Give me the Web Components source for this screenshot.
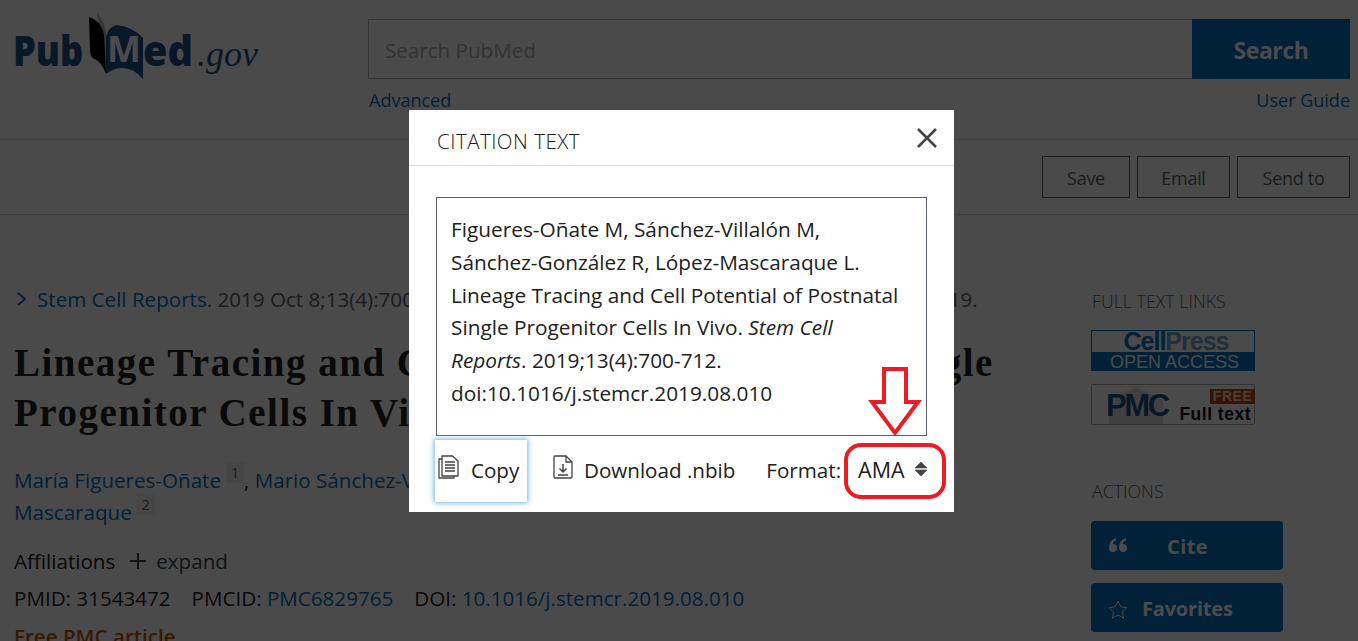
<!DOCTYPE html>
<html lang="en">
<head>
<meta charset="utf-8">
<title>PubMed citation</title>
<style>
  html, body { margin: 0; height: 100%; overflow: hidden; background: #fff; }
  body { font-family: "Open Sans", "Liberation Sans", sans-serif; color: #212121; }
</style>
</head>
<body>
<pm-app>
  <pm-header></pm-header>
  <pm-toolbar></pm-toolbar>
  <pm-main>
    <pm-article></pm-article>
    <pm-aside></pm-aside>
  </pm-main>
  <pm-cite-dialog slot="overlay" format="AMA">
    Figueres-Oñate M, Sánchez-Villalón M, Sánchez-González R, López-Mascaraque L. Lineage Tracing and Cell Potential of Postnatal Single Progenitor Cells In Vivo. <i>Stem Cell Reports</i>. 2019;13(4):700-712. doi:10.1016/j.stemcr.2019.08.010
  </pm-cite-dialog>
</pm-app>

<script>
/* small helper, every element below is the same few lines otherwise */
function define(name, html) {
  const tpl = document.createElement('template');
  tpl.innerHTML = html;
  customElements.define(name, class extends HTMLElement {
    constructor() {
      super();
      this.attachShadow({ mode: 'open' }).appendChild(tpl.content.cloneNode(true));
    }
  });
}

/* ---- page shell + dimmed backdrop ---- */
define('pm-app', `
  <style>
    :host { display: block; position: relative; width: 100%; height: 641px; overflow: hidden; }
    .backdrop { position: absolute; inset: 0; background: rgba(0,0,0,.71); }
    .center { position: absolute; left: 409px; top: 110px; }
  </style>
  <slot></slot>
  <div class="backdrop"></div>
  <div class="center"><slot name="overlay"></slot></div>
`);

/* ---- top search header ---- */
define('pm-header', `
  <style>
    :host { display: flex; box-sizing: border-box; height: 140px; border-bottom: 1px solid #d6d7d9; padding: 0 8px 0 0; }
    .logo { width: 368px; flex: none; position: relative; height: 90px; color: #20558a; font-weight: 800; font-size: 43px; line-height: 1; }
    .logo svg { position: absolute; left: 0; top: 0; }
    .pub, .ed, .m, .gov { position: absolute; }
    .pub, .ed { top: 28px; transform-origin: 0 0; }
    .pub { left: 13px; transform: scaleX(.84); }
    .ed { left: 143px; transform: scaleX(.92); }
    .m { left: 107px; top: 31px; font-size: 36px; font-weight: 700; color: #fff; }
    .gov { left: 197px; top: 36px; font: italic 36px/1 "Liberation Serif", serif; }
    .search { flex: 1; padding-top: 19px; }
    .row { display: flex; height: 60px; }
    .input { flex: 1; box-sizing: border-box; border: 1px solid #aeb0b5; border-right: 0; padding-left: 16px; font-size: 20.6px; line-height: 60px; color: #aeb0b5; }
    .btn { width: 158px; background: #0071bc; color: #fff; font-weight: 700; font-size: 23px; line-height: 62px; text-align: center; letter-spacing: -.4px; }
    .links { display: flex; justify-content: space-between; font-size: 18px; line-height: 24px; color: #0071bc; padding: 9px 0 0 1px; }
  </style>
  <div class="logo">
    <span class="pub">Pub</span><span class="ed">ed</span>
    <svg width="150" height="90" viewBox="0 0 150 90">
      <path d="M97 13 Q105 22 106 33 L106 74 L104 70 Z" fill="#bbb"/>
      <path d="M89 17 Q100 20 104 34 L106 74 Q102 62 93 58 Q90 56 90 50 Z" fill="#000"/>
      <path d="M106 37 Q109 26 117 25 Q133 27 143 38 L143 79 Q126 60 106 74 Z" fill="#20558a"/>
    </svg>
    <span class="m">M</span>
    <span class="gov">.gov</span>
  </div>
  <div class="search">
    <div class="row"><div class="input">Search PubMed</div><div class="btn">Search</div></div>
    <div class="links"><span>Advanced</span><span>User Guide</span></div>
  </div>
`);

/* ---- save / email / send to ---- */
define('pm-toolbar', `
  <style>
    :host { display: flex; justify-content: flex-end; gap: 7px; box-sizing: border-box; height: 75px; border-bottom: 1px solid #d6d7d9; padding: 16px 8px 0 0; }
    span { box-sizing: border-box; height: 42px; border: 1px solid #5b616b; font-size: 18px; line-height: 42px; text-align: center; color: #5b616b; letter-spacing: -.3px; }
  </style>
  <span style="width:88px">Save</span>
  <span style="width:93px">Email</span>
  <span style="width:113px">Send to</span>
`);

define('pm-main', `
  <style>
    :host { display: flex; padding: 71px 0 0 14px; }
    ::slotted(pm-article) { width: 1077px; flex: none; }
  </style>
  <slot></slot>
`);

/* ---- article column, mostly behind the dialog ---- */
define('pm-article', `
  <style>
    :host { display: block; font-size: 20.6px; color: #212121; }
    a { color: #0071bc; }
    .cit { display: flex; align-items: center; line-height: 26px; color: #5b616b; white-space: nowrap; }
    .cit svg { margin: 0 9px 0 2px; }
    h1 { font: 700 39px/50px "Liberation Serif", serif; margin: 26px 0 0; width: 990px; letter-spacing: 1.5px; }
    .authors { margin-top: 26px; line-height: 32px; width: 990px; }
    sup { font-size: 14px; line-height: 0; color: #5b616b; background: #f1f1f1; padding: 1px 5px; margin-left: 5px; position: relative; top: -2px; vertical-align: super; }
    .aff { display: flex; align-items: center; margin-top: 19px; line-height: 28px; }
    .aff svg { margin: 0 10px 0 15px; }
    .aff b { font-weight: 400; color: #3d4551; }
    .ids { margin-top: 9px; line-height: 28px; }
    .ids span { margin-right: 21px; }
    .free { margin-top: 10px; line-height: 28px; color: #c05600; font-weight: 600; }
  </style>
  <div class="cit">
    <svg width="12" height="16" viewBox="0 0 12 16"><path d="M2 2l7 6-7 6" fill="none" stroke="#0071bc" stroke-width="2"/></svg>
    <a>Stem Cell Reports.</a>&nbsp;2019 Oct 8;13(4):700-712. doi: 10.1016/j.stemcr.2019.08.010. Epub 2019 Sep 19.
  </div>
  <h1>Lineage Tracing and Cell Potential of Postnatal Single Progenitor Cells In Vivo</h1>
  <div class="authors">
    <a>María Figueres-Oñate</a><sup>1</sup>, <a>Mario Sánchez-Villalón</a><sup>1</sup>, <a>Rebeca Sánchez-González</a><sup>1</sup>, <a>Laura López-<br>Mascaraque</a><sup>2</sup>
  </div>
  <div class="aff">Affiliations
    <svg width="16" height="16" viewBox="0 0 16 16"><path d="M8 0v16M0 8h16" stroke="#3d4551" stroke-width="2"/></svg>
    <b>expand</b></div>
  <div class="ids"><span>PMID: 31543472</span><span>PMCID: <a>PMC6829765</a></span><span>DOI: <a>10.1016/j.stemcr.2019.08.010</a></span></div>
  <div class="free">Free PMC article</div>
`);

/* ---- right side column ---- */
define('pm-aside', `
  <style>
    :host { display: block; width: 192px; flex: none; padding-top: 4px; }
    h3 { margin: 0 0 0 1px; font-size: 17.600px; line-height: 22px; font-weight: 300; color: #5b616b; letter-spacing: .1px; }
    .cell { box-sizing: border-box; width: 164px; height: 41px; margin-top: 18px; border: 1px solid #0071bc; text-align: center; font-family: "Liberation Sans", sans-serif; }
    .cell .top { height: 21px; font-size: 25px; line-height: 21px; font-weight: 700; color: #0071bc; letter-spacing: -1px; padding-left: 6px; }
    .cell .top i { font-style: normal; color: #6ea5cf; }
    .cell .bot { height: 19px; background: #0071bc; color: #fff; font-size: 18px; line-height: 20px; padding-left: 3px; }
    .pmc { box-sizing: border-box; position: relative; width: 164px; height: 41px; margin: 13px 0 55px; border: 1px solid #aaa; border-radius: 2px; font-family: "Liberation Sans", sans-serif; font-weight: 700; }
    .pmc svg { position: absolute; left: 17px; top: 1px; }
    .pmc .name { position: absolute; left: 14px; top: 6px; font-size: 31px; line-height: 30px; color: #20558a; letter-spacing: -2.400px; }
    .pmc .free { position: absolute; right: -1px; top: 4px; width: 45px; height: 15px; background: #c0400c; color: #f4d6c8; font-size: 14px; line-height: 15px; text-align: center; letter-spacing: .5px; }
    .pmc .full { position: absolute; right: 3px; top: 19px; font-size: 17.500px; line-height: 20px; color: #111; letter-spacing: .5px; }
    .act { display: flex; align-items: center; box-sizing: border-box; width: 192px; height: 49px; margin-top: 13px; background: #0071bc; border-radius: 4px; color: #fff; font-weight: 700; font-size: 20px; letter-spacing: -.2px; position: relative; padding: 2px 0 0 51px; }
    .act.c { margin-top: 19px; padding-left: 76px; letter-spacing: .4px; }
    .act svg { position: absolute; left: 17px; top: 17px; }
  </style>
  <h3>FULL TEXT LINKS</h3>
  <div class="cell"><div class="top">Cell<i>Press</i></div><div class="bot">OPEN ACCESS</div></div>
  <div class="pmc">
    <svg width="56" height="39" viewBox="0 0 56 39"><path d="M0 14L27 1l27 13v24H0z" fill="#ddd"/></svg>
    <span class="name">PMC</span><span class="free">FREE</span><span class="full">Full text</span>
  </div>
  <h3>ACTIONS</h3>
  <div class="act c">
    <svg width="20" height="16" viewBox="0 0 20 16"><path d="M8 0Q1 2 1 10a4 4 0 1 0 4-4Q5 3.500 8 2.500zM18 0q-7 2-7 10a4 4 0 1 0 4-4q0-2.500 3-3.500z" fill="#fff"/></svg>
    Cite
  </div>
  <div class="act">
    <svg width="20" height="19" viewBox="0 0 20 19"><path d="M10 1l2.700 5.800 6.300.8-4.600 4.300 1.200 6.200L10 15l-5.600 3.100 1.200-6.200L1 7.600l6.300-.8z" fill="none" stroke="#fff" stroke-width="1"/></svg>
    Favorites
  </div>
`);

/* ---- the citation dialog + red annotation ---- */
const dialogTpl = document.createElement('template');
dialogTpl.innerHTML = `
  <style>
    :host { display: block; position: relative; box-sizing: border-box; width: 545px; height: 402px; background: #fff; color: #212121; font-size: 20px; }
    header { display: flex; justify-content: space-between; align-items: center; height: 56px; box-sizing: border-box; border-bottom: 1px solid #dcdcdc; padding: 0 16px 0 28px; }
    h2 { margin: 7px 0 0; font-size: 20.500px; font-weight: 300; letter-spacing: .5px; color: #212121; }
    .text { box-sizing: border-box; width: 491px; height: 239px; margin: 31px 0 0 27px; border: 1px solid #5b616b; padding: 15px 24px 0 14px; font-size: 20.800px; line-height: 32.800px; }
    .tools { display: flex; align-items: center; height: 62px; margin: 4px 0 0 26px; font-size: 20.600px; }
    .tools span { margin-bottom: 3px; }
    .tools svg { margin-bottom: 8px; }
    .copy { display: flex; align-items: center; box-sizing: border-box; width: 92px; height: 62px; box-shadow: 0 0 5px 1px #6db3e6; padding-left: 3px; gap: 12px; }
    .down { display: flex; align-items: center; gap: 11px; margin-left: 26px; }
    .fmt { margin-left: 31px; }
    .sel { display: flex; align-items: center; gap: 10px; margin-left: 17px; }
    .sel span { font-size: 21.500px; }
    .tools .sel svg { margin-bottom: 4px; }
    .arrow { position: absolute; left: 0; top: 0; pointer-events: none; }
  </style>
  <header>
    <h2>CITATION TEXT</h2>
    <svg width="22" height="22" viewBox="0 0 22 22"><path d="M2 2l18 18M20 2L2 20" stroke="#444" stroke-width="2.600"/></svg>
  </header>
  <div class="text"><slot></slot></div>
  <div class="tools">
    <div class="copy">
      <svg width="21" height="24" viewBox="0 0 21 24" fill="none" stroke="#444" stroke-width="1.300"><path d="M4 1h10.500L20 6v15H4z" stroke-linejoin="round"/><path d="M4 4H1v19h15v-2" stroke-linejoin="round"/><path d="M7 7h10M7 10h10M7 13h10M7 16h10" stroke-width="1.500"/></svg>
      <span>Copy</span>
    </div>
    <div class="down">
      <svg width="20" height="24" viewBox="0 0 20 24" fill="none" stroke="#444" stroke-width="1.300"><path d="M2 1h11l6 6v15q0 1-1 1H2q-1 0-1-1V2q0-1 1-1z"/><path d="M13 1v6h6"/><path d="M10 9v8M6.500 13.500l3.500 3.500 3.500-3.500M5 20h10" stroke-width="1.500"/></svg>
      <span>Download .nbib</span>
    </div>
    <span class="fmt">Format:</span>
    <div class="sel">
      <span id="format"></span>
      <svg width="12" height="14" viewBox="0 0 12 14"><path d="M6 0l6 6H0zM6 14l6-6H0z" fill="#444" stroke="#444" stroke-width=".6" stroke-linejoin="round"/></svg>
    </div>
  </div>
  <svg class="arrow" width="545" height="402" viewBox="0 0 545 402" fill="none" stroke="#ed1c24" stroke-width="4">
    <rect x="437" y="335" width="98" height="52" rx="15"/>
    <path d="M475 259h22v33h12l-23 31-23-31h12z"/>
  </svg>
`;

class PmCiteDialog extends HTMLElement {
  static observedAttributes = ['format'];

  constructor() {
    super();
    this.attachShadow({ mode: 'open' }).appendChild(dialogTpl.content.cloneNode(true));
  }

  attributeChangedCallback() {
    this.shadowRoot.getElementById('format').textContent = this.getAttribute('format');
  }
}
customElements.define('pm-cite-dialog', PmCiteDialog);
</script>
</body>
</html>
